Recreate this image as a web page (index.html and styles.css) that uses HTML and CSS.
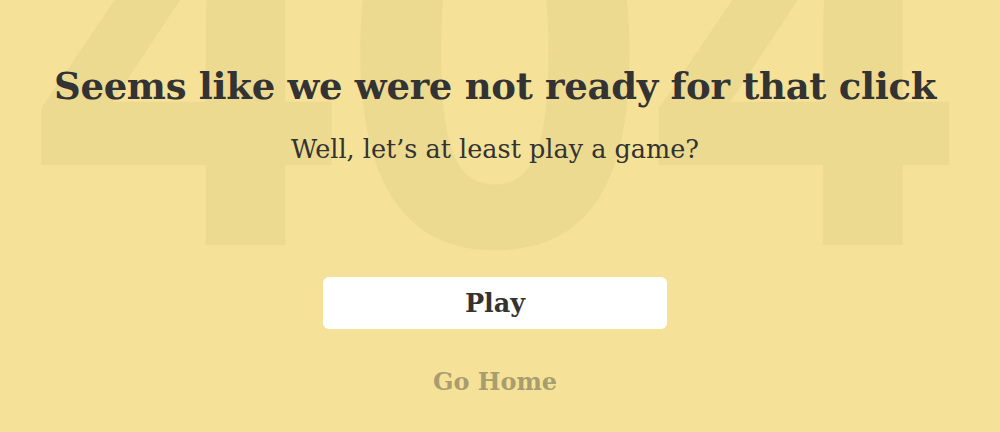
FILE: index.html
```html
<!DOCTYPE html>
<html lang="en">
<head>
<meta charset="utf-8">
<title>404</title>
<link rel="stylesheet" href="styles.css">
</head>
<body>
<main class="page">
  <div class="bg-code" aria-hidden="true">404</div>
  <section class="content">
    <h1 class="title">Seems like we were not ready for that click</h1>
    <p class="subtitle">Well, let’s at least play a game?</p>
    <button class="play" type="button">Play</button>
    <a class="home" href="#">Go Home</a>
  </section>
</main>
</body>
</html>
```
FILE: styles.css
```css
* { box-sizing: border-box; }
html, body { margin: 0; padding: 0; }
body {
  background: #f5e298;
  font-family: "DejaVu Serif", "Liberation Serif", serif;
  color: #333333;
  overflow: hidden;
}
.page {
  position: relative;
  width: 990px;
  height: 432px;
}
.bg-code {
  position: absolute;
  left: 0;
  right: 0;
  top: -234px;
  text-align: center;
  font-family: "Open Sans", sans-serif;
  font-weight: 700;
  font-size: 540px;
  line-height: 1;
  color: rgba(120, 100, 40, 0.06);
  z-index: 0;
  user-select: none;
}
.content {
  position: relative;
  z-index: 1;
  display: flex;
  flex-direction: column;
  align-items: center;
  padding-top: 60px;
}
.title {
  margin: 0;
  font-size: 37px;
  line-height: 52px;
  font-weight: 700;
  letter-spacing: -0.3px;
}
.subtitle {
  margin: 21px 0 0;
  font-size: 25.5px;
  line-height: 32px;
  font-weight: 400;
}
.play {
  margin-top: 112px;
  width: 344px;
  height: 52px;
  border: 0;
  border-radius: 6px;
  background: #ffffff;
  font-family: inherit;
  font-weight: 700;
  font-size: 25.5px;
  color: #333333;
  cursor: pointer;
}
.home {
  margin-top: 38px;
  font-weight: 700;
  font-size: 24px;
  color: #a89d6f;
  text-decoration: none;
}
```
